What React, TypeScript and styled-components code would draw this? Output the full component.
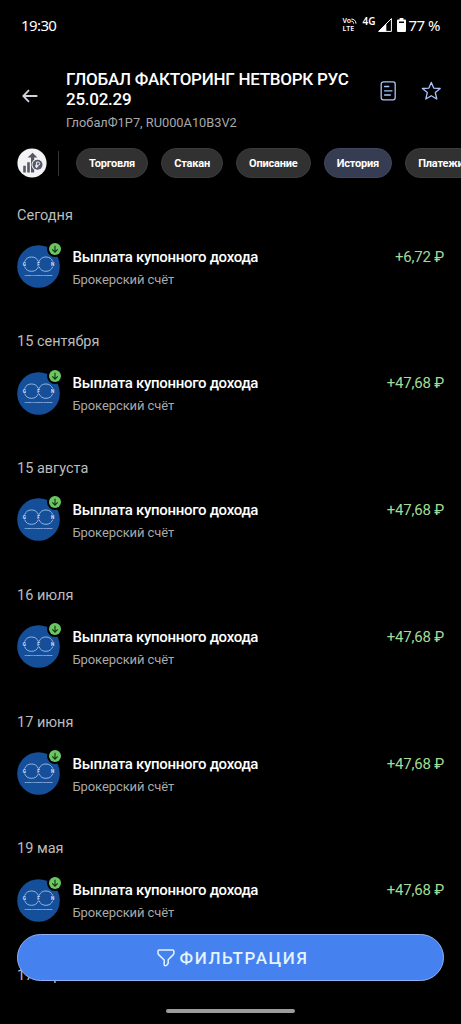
import React from "react";
import styled, { createGlobalStyle, css } from "styled-components";

interface IPayment {
  date: string;
  amount: string;
}

const tabs = ["Торговля", "Стакан", "Описание", "История", "Платежи"];

const payments: IPayment[] = [
  { date: "Сегодня", amount: "+6,72 ₽" },
  { date: "15 сентября", amount: "+47,68 ₽" },
  { date: "15 августа", amount: "+47,68 ₽" },
  { date: "16 июля", amount: "+47,68 ₽" },
  { date: "17 июня", amount: "+47,68 ₽" },
  { date: "19 мая", amount: "+47,68 ₽" },
];

function StatusIcons() {
  return (
    <StStatusIcons>
      <StVolte>
        <span>
          Vo
          <svg width="6" height="6" viewBox="0 0 6 6" fill="none" stroke="#fff">
            <path d="M.3 1C2.8 1 5 2.8 5 5.6M.3 3.2C1.6 3.2 2.6 4 2.6 5.6" />
          </svg>
        </span>
        <span>LTE</span>
      </StVolte>
      <StNetwork>4G</StNetwork>
      <StSignal width="14" height="14" viewBox="0 0 14 14">
        <path d="M13.4.6V13.4H.6Z" fill="none" stroke="#fff" strokeWidth="1" />
        <path d="M8.3 5.6V13.5H.3Z" fill="#fff" />
      </StSignal>
      <StBattery width="9" height="14" viewBox="0 0 9 14">
        <path
          fillRule="evenodd"
          fill="#fff"
          d="M2.6 0H6.4V1.5H8Q9 1.5 9 2.5V13Q9 14 8 14H1Q0 14 0 13V2.5Q0 1.5 1 1.5H2.6ZM2 3.4V5H7V3.4Z"
        />
      </StBattery>
      <StPercent>77 %</StPercent>
    </StStatusIcons>
  );
}

function BackIcon() {
  return (
    <svg width="16" height="14" viewBox="0 0 16 14" fill="none" stroke="#d5d1dc" strokeWidth="1.8">
      <path d="M15.4 7H1.5M7 1.2 1.3 7 7 12.8" />
    </svg>
  );
}

function DocumentIcon() {
  return (
    <svg width="16" height="20" viewBox="0 0 16 20" fill="none" stroke="#a9c3fb" strokeWidth="1.3">
      <rect x="1.2" y=".8" width="14" height="18" rx="2.2" />
      <path d="M4.6 5.5H8.8M4.6 9.8H12M4.6 14H10.3" strokeLinecap="round" />
    </svg>
  );
}

function StarIcon() {
  return (
    <svg
      width="20"
      height="20"
      viewBox="0 0 20 20"
      fill="none"
      stroke="#a9c3fb"
      strokeWidth="1.3"
      strokeLinejoin="round"
    >
      <path d="M10.3 1.4 12.7 7.1 19.2 7.5 14.3 11.6 15.8 18 10.3 14.7 4.8 18 6.3 11.6 1.4 7.5 7.9 7.1Z" />
    </svg>
  );
}

function GrowthIcon() {
  return (
    <svg width="30" height="30" viewBox="0 0 30 30">
      <circle cx="15" cy="15" r="14.6" fill="#f3f3f5" />
      <g fill="#555967">
        <path d="M6.2 17.8H8.8V24.5H6.2ZM10.2 14.3H12.8V24.5H10.2ZM14 24.5V9.6H10.6L15.6 4.8 20.4 9.6H17.2V24.5Z" />
        <circle cx="20.5" cy="16.8" r="6" fill="#f3f3f5" />
        <circle cx="20.5" cy="16.8" r="5" />
      </g>
      <path
        d="M19.6 20V14H21.1A1.6 1.6 0 0 1 21.1 17.3H18.2M18.2 18.7H21.3"
        fill="none"
        stroke="#f3f3f5"
        strokeWidth="1"
      />
    </svg>
  );
}

function CompanyLogo() {
  return (
    <svg width="43" height="43" viewBox="0 0 43 43">
      <circle cx="21.5" cy="21.5" r="21.3" fill="#154f99" />
      <g fill="none" stroke="#9fc2ea" strokeWidth=".9">
        <path d="M7.6 16.7A7.4 7.4 0 0 1 21.4 16.7M7.6 21.6A7.4 7.4 0 0 0 21.4 21.6" />
        <path d="M22 16.7A7.4 7.4 0 0 1 35.8 16.7M22 21.6A7.4 7.4 0 0 0 35.8 21.6" />
      </g>
      <g fill="#dcebff" fontFamily="Roboto, sans-serif" fontSize="4.6" fontWeight="700" textAnchor="middle">
        <text x="7.4" y="20.8">G</text>
        <text x="21.6" y="20.8">F</text>
        <text x="35.5" y="20.8">N</text>
      </g>
      <text
        x="21.5"
        y="31.2"
        fill="#b5d0f0"
        fontFamily="Roboto, sans-serif"
        fontSize="2.4"
        fontWeight="700"
        textAnchor="middle"
        textLength="28"
      >
        GLOBAL FACTORING NETWORK
      </text>
    </svg>
  );
}

function IncomeIcon() {
  return (
    <svg width="12" height="12" viewBox="0 0 12 12">
      <circle cx="6" cy="6" r="6" fill="#6cc763" />
      <path d="M6 2.7V9M3.3 6.4 6 9.1 8.7 6.4" fill="none" stroke="#14320f" strokeWidth="1.1" />
    </svg>
  );
}

function FilterIcon() {
  return (
    <svg
      width="18"
      height="18"
      viewBox="0 0 18 18"
      fill="none"
      stroke="#e3f4ff"
      strokeWidth="1.5"
      strokeLinejoin="round"
    >
      <path d="M2.2 1H15.6Q16.9 1 16.9 2.3V4.3Q16.9 5 16.3 5.6L11.2 10.7V14.2L9.6 16.4Q7.2 17.4 7.2 15.4V11L1.6 5.6Q1 5 1 4.3V2.3Q1 1 2.2 1Z" />
    </svg>
  );
}

function Payment({ date, amount }: IPayment) {
  return (
    <StPayment>
      <StDate>{date}</StDate>
      <StPaymentRow>
        <StLogoWrapper>
          <CompanyLogo />
          <StLogoBadge>
            <IncomeIcon />
          </StLogoBadge>
        </StLogoWrapper>
        <StPaymentInfo>
          <StPaymentName>Выплата купонного дохода</StPaymentName>
          <StPaymentAccount>Брокерский счёт</StPaymentAccount>
        </StPaymentInfo>
        <StAmount>{amount}</StAmount>
      </StPaymentRow>
    </StPayment>
  );
}

function App() {
  return (
    <StWrapper>
      <GlobalStyle />
      <StStatusBar>
        <StTime>19:30</StTime>
        <StatusIcons />
      </StStatusBar>
      <StHeader>
        <StBackBtn aria-label="Назад">
          <BackIcon />
        </StBackBtn>
        <StHeaderText>
          <StTitle>
            ГЛОБАЛ ФАКТОРИНГ НЕТВОРК РУС
            <br />
            25.02.29
          </StTitle>
          <StSubtitle>ГлобалФ1Р7, RU000A10B3V2</StSubtitle>
        </StHeaderText>
        <StActions>
          <DocumentIcon />
          <StarIcon />
        </StActions>
      </StHeader>
      <StTabs>
        <GrowthIcon />
        <StDivider />
        {tabs.map((tab) => (
          <StTab key={tab} $active={tab === "История"}>
            {tab}
          </StTab>
        ))}
      </StTabs>
      <StPayments>
        {payments.map((payment) => (
          <Payment key={payment.date} {...payment} />
        ))}
        <StDate>17 апреля</StDate>
      </StPayments>
      <StFooter>
        <StFilterBtn>
          <FilterIcon />
          ФИЛЬТРАЦИЯ
        </StFilterBtn>
        <StHomeBar />
      </StFooter>
    </StWrapper>
  );
}

export default App;

const GlobalStyle = createGlobalStyle`
  * {
    box-sizing: border-box;
  }

  body {
    margin: 0;
    background-color: #000;
    font-family: Roboto, "Liberation Sans", sans-serif;
  }

  button {
    font-family: inherit;
    border: none;
    cursor: pointer;
  }

  svg {
    display: block;
    flex-shrink: 0;
  }
`;

const StWrapper = styled.div`
  position: relative;
  display: flex;
  flex-direction: column;
  width: 461px;
  height: 1024px;
  overflow: hidden;
  color: white;
  background-color: #000;
`;

const StStatusBar = styled.div`
  display: flex;
  flex-shrink: 0;
  justify-content: space-between;
  height: 69px;
  padding: 15px 21px 0 21px;
  font-family: "Noto Sans", sans-serif;
`;

const StTime = styled.span`
  font-size: 15px;
  line-height: 20px;
  letter-spacing: -0.6px;
`;

const StStatusIcons = styled.div`
  display: flex;
  align-items: flex-start;
`;

const StVolte = styled.div`
  display: flex;
  flex-direction: column;
  width: 20px;
  padding-top: 2px;
  font-size: 7px;
  font-weight: 600;
  line-height: 8px;

  span {
    display: flex;
    align-items: center;
    height: 8px;
  }
`;

const StNetwork = styled.span`
  width: 16px;
  font-size: 10px;
  font-weight: 600;
  line-height: 13px;
`;

const StSignal = styled.svg`
  margin-top: 3px;
`;

const StBattery = styled.svg`
  margin: 3px 2px 0 5px;
`;

const StPercent = styled.span`
  font-size: 15px;
  line-height: 20px;
  letter-spacing: -0.5px;
`;

const StHeader = styled.header`
  display: flex;
  flex-shrink: 0;
  height: 76.5px;
  padding: 0 20px 0 22px;
`;

const StBackBtn = styled.button`
  width: 44px;
  height: 20px;
  margin-top: 17px;
  padding: 0;
  background: none;
`;

const StHeaderText = styled.div`
  flex: 1;
  white-space: nowrap;
`;

const StTitle = styled.h1`
  margin: 0;
  font-size: 17px;
  font-weight: 500;
  line-height: 20px;
  letter-spacing: -0.26px;
`;

const StSubtitle = styled.p`
  margin: 5px 0 0;
  font-size: 12.8px;
  line-height: 17px;
  color: #a8a8a8;
`;

const StActions = styled.div`
  display: flex;
  align-items: flex-start;
  gap: 25px;
  padding-top: 12px;
`;

const StTabs = styled.nav`
  display: flex;
  flex-shrink: 0;
  align-items: center;
  height: 35px;
  padding-left: 17px;
  overflow: hidden;
`;

const StDivider = styled.div`
  flex-shrink: 0;
  width: 1px;
  height: 25px;
  margin: 0 17px 0 11px;
  background-color: #333;
`;

const StTab = styled.button<{ $active: boolean }>`
  flex-shrink: 0;
  height: 30px;
  margin-right: 13.2px;
  padding: 0 12px;
  border: 1px solid #3b3b3b;
  border-radius: 15px;
  color: white;
  font-size: 11px;
  font-weight: 700;
  letter-spacing: -0.2px;
  background-color: #313131;

  ${({ $active }) =>
    $active &&
    css`
      border-color: #40465c;
      background-color: #363c52;
    `}
`;

const StPayments = styled.main`
  display: flex;
  flex-direction: column;
  padding: 24.5px 17px 0;
`;

const StPayment = styled.section`
  flex-shrink: 0;
  height: 126.75px;
`;

const StDate = styled.h2`
  margin: 0;
  padding-top: 0.6px;
  font-size: 14.5px;
  font-weight: 400;
  line-height: 20px;
  color: #bdbdbd;
`;

const StPaymentRow = styled.div`
  display: flex;
  margin-top: 19.4px;
`;

const StLogoWrapper = styled.div`
  position: relative;
  width: 43px;
  height: 43px;
`;

const StLogoBadge = styled.div`
  position: absolute;
  top: -4px;
  right: -3px;
  border: 2px solid #000;
  border-radius: 50%;
  background-color: #000;
`;

const StPaymentInfo = styled.div`
  flex: 1;
  margin-left: 12.5px;
`;

const StPaymentName = styled.div`
  margin-top: 1.6px;
  font-size: 15px;
  font-weight: 500;
  line-height: 20px;
  letter-spacing: -0.3px;
`;

const StPaymentAccount = styled.div`
  margin-top: 4px;
  font-size: 13px;
  line-height: 18px;
  letter-spacing: -0.1px;
  color: #a8a8a8;
`;

const StAmount = styled.div`
  margin-top: 1.6px;
  font-size: 15px;
  line-height: 20px;
  letter-spacing: -0.2px;
  color: #a3dc96;
`;

const StFooter = styled.footer`
  position: absolute;
  right: 0;
  bottom: 0;
  left: 0;
  display: flex;
  flex-direction: column;
  align-items: center;
  padding: 0 17px 11px;
`;

const StFilterBtn = styled.button`
  display: flex;
  justify-content: center;
  align-items: center;
  gap: 5px;
  width: 427px;
  height: 47px;
  margin-bottom: 28px;
  padding: 0 0 0 4px;
  border: 1px solid #8fb2f7;
  border-radius: 24px;
  color: #e3f4ff;
  font-size: 17px;
  font-weight: 500;
  letter-spacing: 1.6px;
  background-color: #4681f0;
`;

const StHomeBar = styled.div`
  width: 129px;
  height: 4px;
  border-radius: 2px;
  background-color: #9c9c9c;
`;
